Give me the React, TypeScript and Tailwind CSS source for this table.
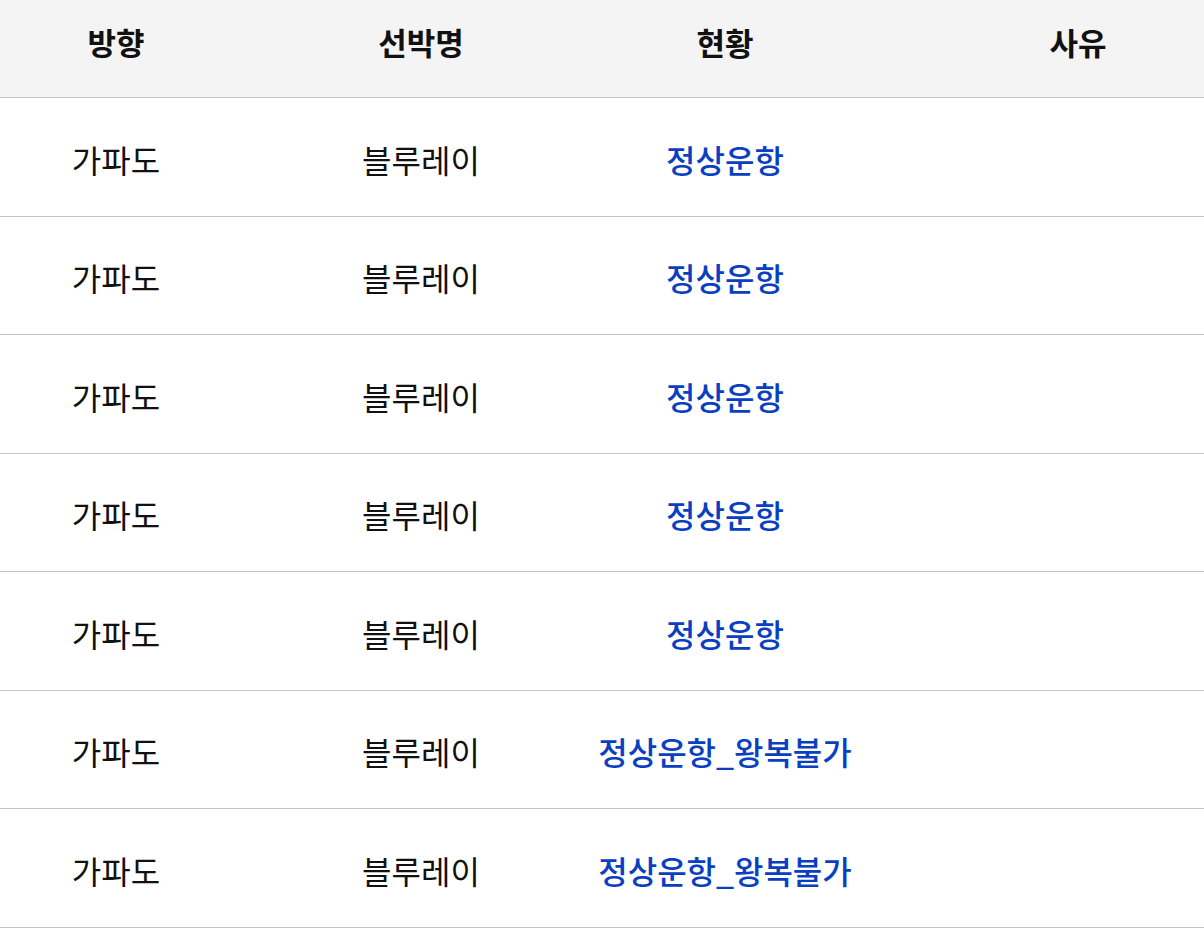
import React from "react";

const rows = [
  "정상운항",
  "정상운항",
  "정상운항",
  "정상운항",
  "정상운항",
  "정상운항_왕복불가",
  "정상운항_왕복불가",
];

export default function App() {
  return (
    <div
      className="w-[1204px] h-[948px] bg-white text-[#111111]"
      style={{ fontFamily: '"Noto Sans CJK KR", "Noto Sans", sans-serif' }}
    >
      <div className="grid grid-cols-[232px_378px_230px_1fr] h-[98px] pb-[12px] bg-[#f4f4f4] border-b border-[#c4c4c4] items-center text-[31px] font-bold">
        <div className="text-center">방향</div>
        <div className="text-center">선박명</div>
        <div className="text-center">현황</div>
        <div className="text-center pl-[112px]">사유</div>
      </div>
      {rows.map((s, i) => (
        <div
          key={i}
          className="grid grid-cols-[232px_378px_230px_1fr] h-[118.5px] pt-[4px] border-b border-[#c4c4c4] items-center text-[32px]"
        >
          <div className="text-center">가파도</div>
          <div className="text-center">블루레이</div>
          <div className="flex justify-center">
            <span className="font-medium text-[#0a3fc2] whitespace-nowrap">{s}</span>
          </div>
          <div></div>
        </div>
      ))}
    </div>
  );
}
